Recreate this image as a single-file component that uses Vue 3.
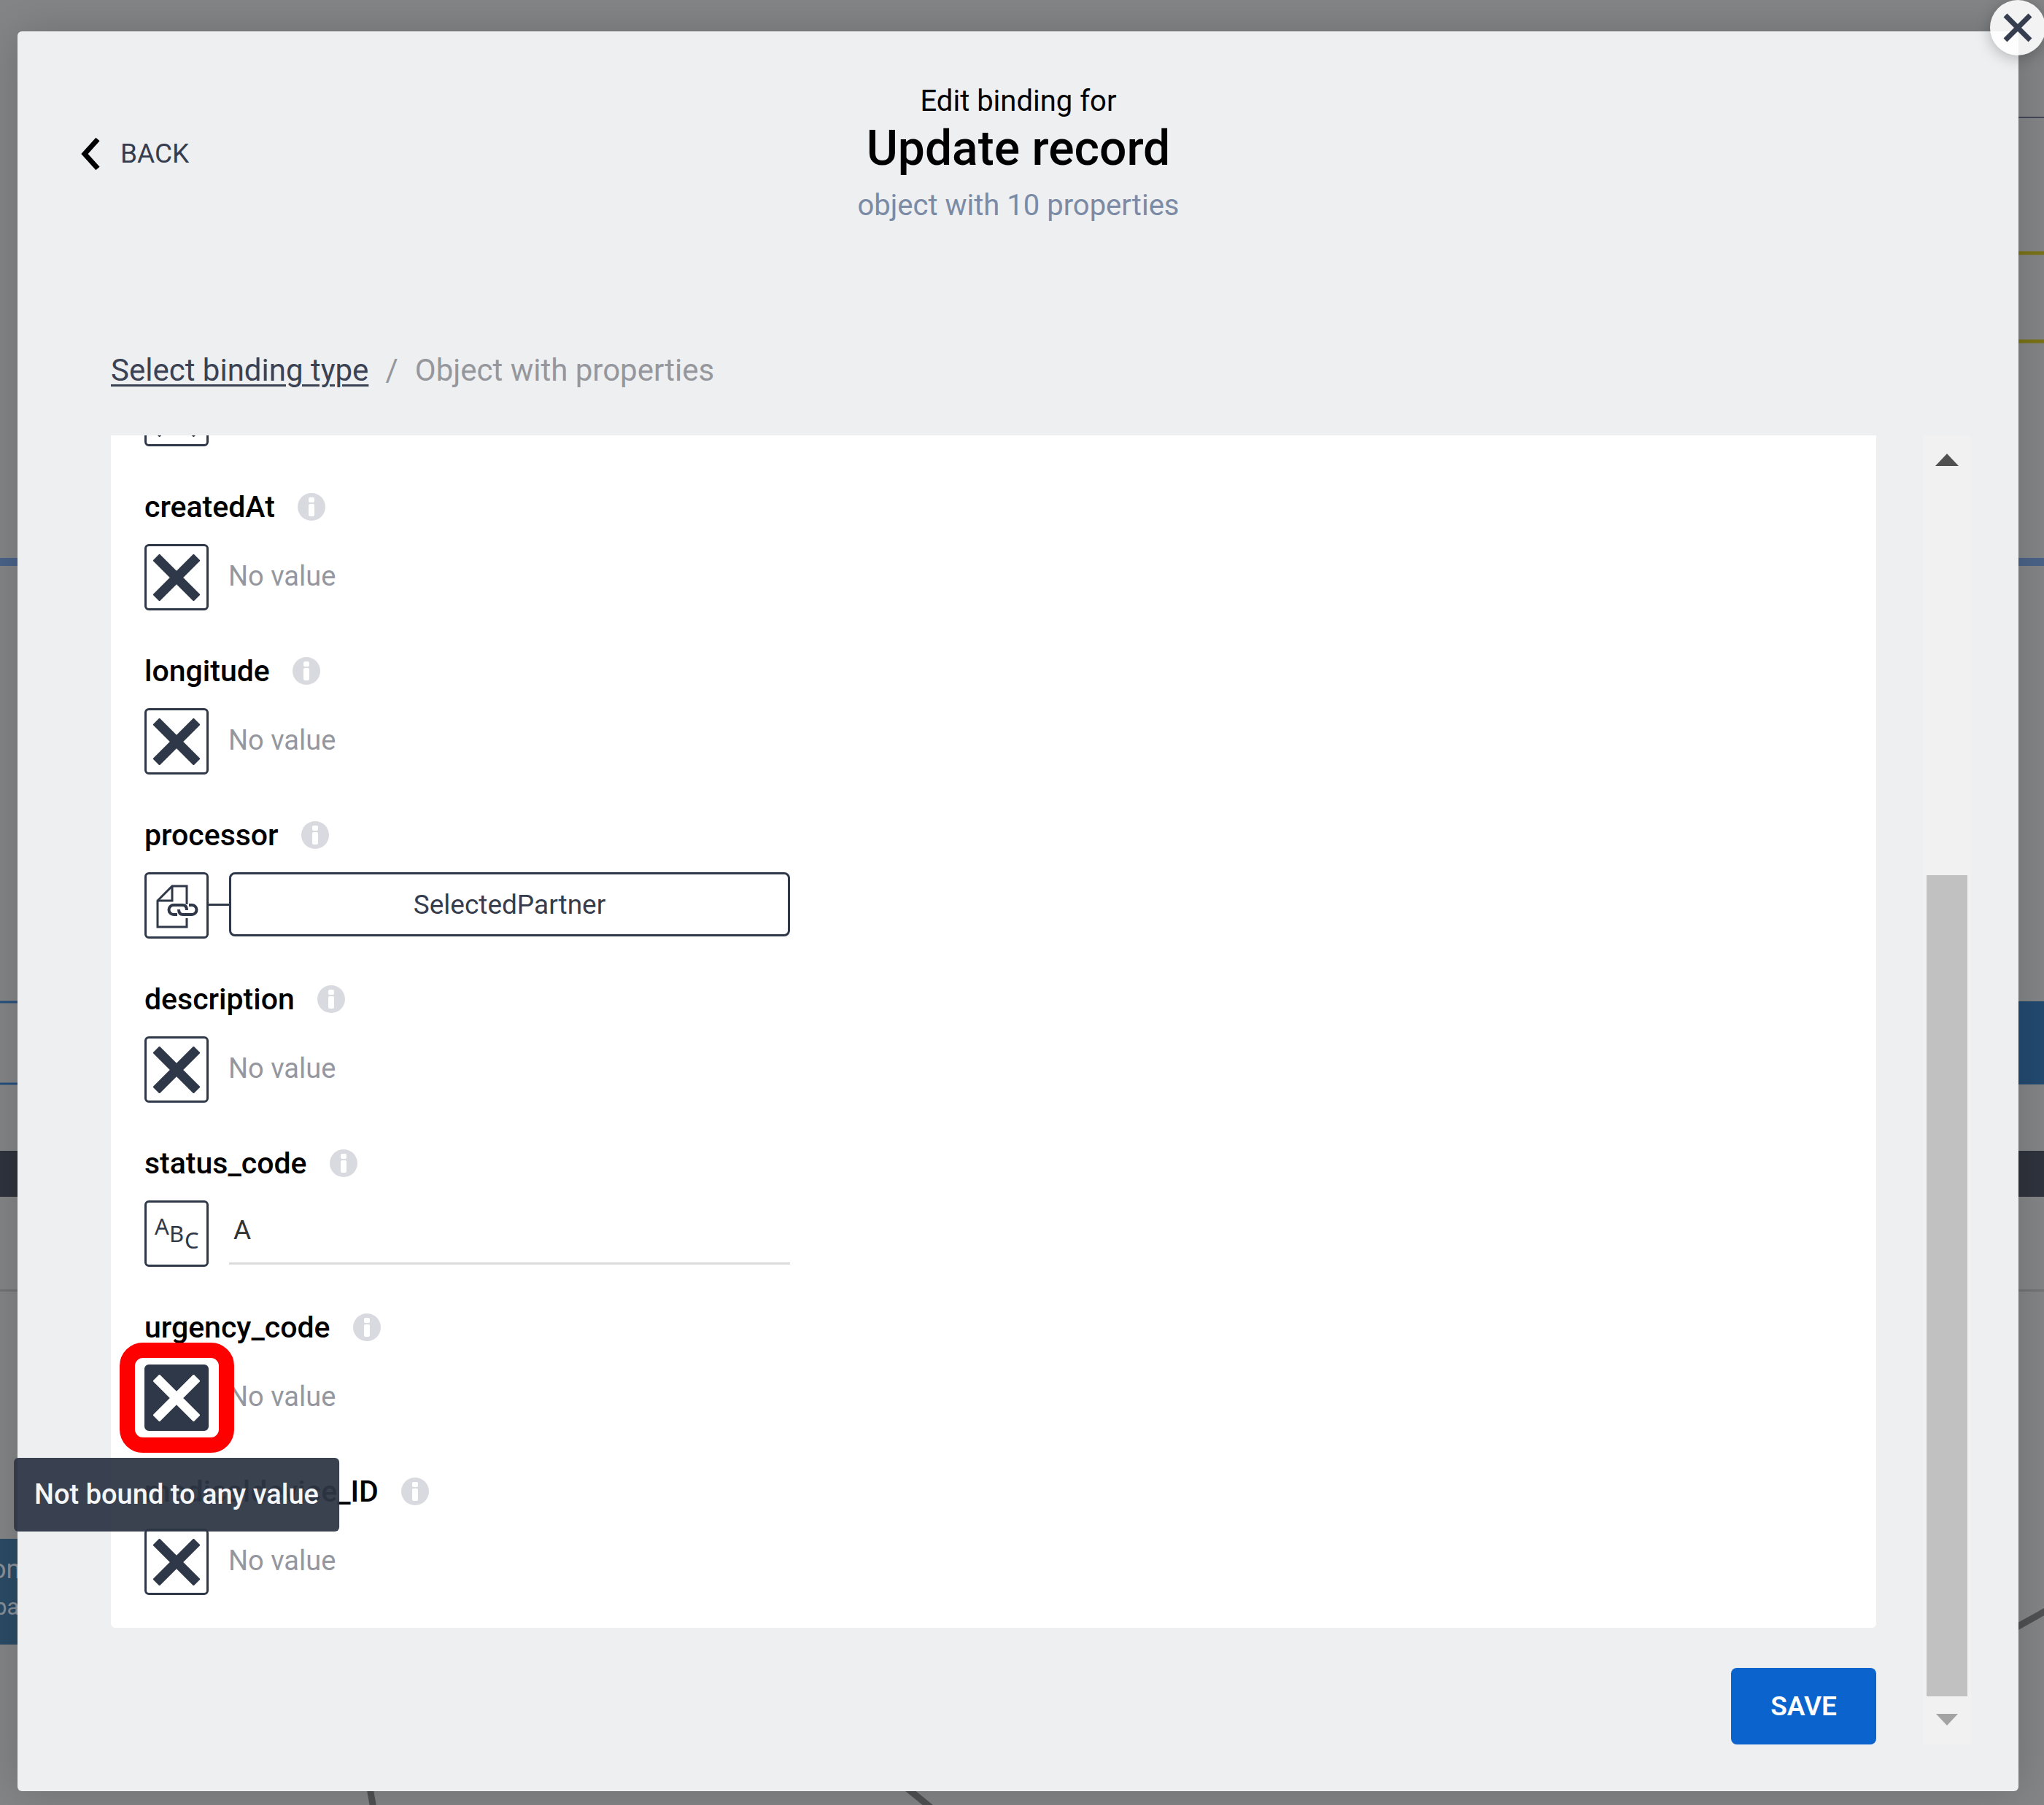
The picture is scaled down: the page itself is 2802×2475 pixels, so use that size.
<script setup>
import { ref } from 'vue'

const fields = ref([
  { name: 'createdAt', kind: 'none' },
  { name: 'longitude', kind: 'none' },
  { name: 'processor', kind: 'variable', value: 'SelectedPartner' },
  { name: 'description', kind: 'none' },
  { name: 'status_code', kind: 'text', value: 'A' },
  { name: 'urgency_code', kind: 'none', active: true },
  { name: 'medicaldevice_ID', kind: 'none' },
])
</script>

<template>
  <div class="screen">
    <div class="canvas" aria-hidden="true">
      <div class="band band-blue"></div>
      <div class="band band-dark"></div>
      <div class="band band-rule"></div>
      <svg class="canvas-left" width="1400" height="2475" viewBox="0 0 1400 2475">
        <path d="M0 1374H30M0 1486H30" stroke="#25517f" stroke-width="3" />
        <rect x="0" y="2110" width="60" height="145" fill="#2b4c66" />
        <text x="-12" y="2164" font-size="36">on</text>
        <text x="-8" y="2214" font-size="31">pa</text>
        <path d="M506 2446L512 2480" stroke="#505152" stroke-width="9" />
        <path d="M1236 2446L1278 2480" stroke="#505152" stroke-width="9" />
      </svg>
      <svg class="canvas-right" width="60" height="2475" viewBox="0 0 60 2475">
        <path d="M0 161H60" stroke="#454859" stroke-width="2" />
        <path d="M0 347H60M0 468H60" stroke="#7a7318" stroke-width="5" />
        <rect x="0" y="1373" width="60" height="114" fill="#234a70" />
        <path d="M10 2238L64 2208" stroke="#505152" stroke-width="9" />
      </svg>
    </div>

    <section class="modal" role="dialog" aria-labelledby="dialog-title">
      <button class="close" type="button" aria-label="Close">
        <svg width="40" height="40" viewBox="0 0 40 40">
          <path d="M3 3L37 37M37 3L3 37" stroke="#363d4e" stroke-width="7" />
        </svg>
      </button>

      <header class="header">
        <button class="back" type="button">
          <svg width="27" height="46" viewBox="0 0 27 46">
            <path d="M24 3L6 23L24 43" fill="none" stroke="#000" stroke-width="7" />
          </svg>
          BACK
        </button>
        <div class="titles">
          <p class="pretitle">Edit binding for</p>
          <h1 id="dialog-title" class="title">Update record</h1>
          <p class="subtitle">object with 10 properties</p>
        </div>
      </header>

      <nav class="crumbs" aria-label="Breadcrumb">
        <a href="#">Select binding type</a>
        <span>/</span>
        <span>Object with properties</span>
      </nav>

      <div class="body">
        <div class="main">
          <div class="panel">
            <button class="kind" type="button" aria-label="Binding type">
              <svg width="64" height="64" viewBox="0 0 64 64">
                <path d="M4 4L60 60M60 4L4 60" stroke="currentColor" stroke-width="13" />
              </svg>
            </button>
            <div v-for="field in fields" :key="field.name" class="field">
              <div class="field-head">
                <label :for="field.name">{{ field.name }}</label>
                <svg class="info" width="38" height="38" viewBox="0 0 38 38">
                  <circle cx="19" cy="19" r="19" fill="#d8dadf" />
                  <rect x="15" y="6" width="8" height="7" rx="2" fill="#fff" />
                  <rect x="15" y="15" width="8" height="17" rx="2" fill="#fff" />
                </svg>
              </div>
              <div class="field-row">
                <div class="kind-wrap">
                  <button
                    :id="field.kind === 'text' ? undefined : field.name"
                    class="kind"
                    :class="{ active: field.active }"
                    type="button"
                    :aria-label="'Binding type of ' + field.name"
                  >
                    <svg width="64" height="64" viewBox="0 0 64 64">
                      <path
                        v-if="field.kind === 'none'"
                        d="M4 4L60 60M60 4L4 60"
                        stroke="currentColor"
                        stroke-width="13"
                      />
                      <g
                        v-else-if="field.kind === 'variable'"
                        fill="none"
                        stroke="currentColor"
                        stroke-width="3"
                      >
                        <path d="M46 30V5H26L6 25V61H46V49" />
                        <path d="M26 5V25H6" />
                        <path d="M33 44H28A6 6 0 0 1 28 31H40Q46 31 46 38" stroke-width="4" />
                        <path d="M49 31H53A6 6 0 0 1 53 44H41Q35 44 35 37" stroke-width="4" />
                      </g>
                      <g v-else class="abc" fill="currentColor">
                        <text x="2" y="33">A</text>
                        <text x="22" y="43">B</text>
                        <text x="43" y="52">C</text>
                      </g>
                    </svg>
                  </button>
                  <template v-if="field.active">
                    <span class="ring"></span>
                    <span class="tooltip" role="tooltip">Not bound to any value</span>
                  </template>
                </div>
                <span v-if="field.kind === 'none'" class="empty">No value</span>
                <template v-else-if="field.kind === 'variable'">
                  <span class="link-line"></span>
                  <button class="variable" type="button">{{ field.value }}</button>
                </template>
                <input v-else :id="field.name" v-model="field.value" class="text" type="text" />
              </div>
            </div>
          </div>
          <button class="save" type="button">SAVE</button>
        </div>

        <div class="scrollbar" aria-hidden="true">
          <div class="arrow">
            <svg width="32" height="18" viewBox="0 0 32 18"><path d="M0 18L16 1L32 18Z" fill="#505050" /></svg>
          </div>
          <div class="track-space"></div>
          <div class="thumb"></div>
          <div class="arrow">
            <svg width="32" height="18" viewBox="0 0 32 18"><path d="M1 0L16 16L31 0Z" fill="#a3a3a3" /></svg>
          </div>
        </div>
      </div>
    </section>
  </div>
</template>

<style>
body {
  margin: 0;
}
</style>

<style scoped>
.screen {
  position: relative;
  display: flex;
  box-sizing: border-box;
  height: 100vh;
  padding: 43px 35px 19px 24px;
  overflow: hidden;
  background: #848586;
  font-family: Roboto, "Open Sans", sans-serif;
  color: #000;
}

button {
  padding: 0;
  border: 0;
  background: none;
  font: inherit;
}

svg {
  display: block;
  flex: none;
}

.canvas {
  position: absolute;
  inset: 0;
}

.canvas text {
  fill: #8a929a;
}

.canvas-left,
.canvas-right {
  position: absolute;
  top: 0;
  left: 0;
}

.canvas-right {
  left: auto;
  right: 0;
}

.band {
  position: absolute;
  left: 0;
  right: 0;
}

.band-blue {
  top: 765px;
  height: 11px;
  background: #4a6388;
}

.band-dark {
  top: 1578px;
  height: 63px;
  background: #2f333d;
}

.band-rule {
  top: 1768px;
  height: 3px;
  background: #727374;
}

.modal {
  position: relative;
  display: flex;
  flex: 1;
  flex-direction: column;
  box-sizing: border-box;
  padding: 72px 65px 64px 128px;
  border-radius: 6px;
  background: #eeeff1;
  box-shadow: 0 0 60px rgba(0, 0, 0, 0.18);
}

.close {
  position: absolute;
  top: -43px;
  right: -37px;
  display: flex;
  align-items: center;
  justify-content: center;
  width: 76px;
  height: 76px;
  border-radius: 50%;
  background: rgba(255, 255, 255, 0.9);
  box-shadow: 0 4px 20px rgba(0, 0, 0, 0.25);
}

.header {
  display: grid;
  grid-template-columns: 1fr auto 1fr;
  align-items: center;
  margin: 0 20px 177px -42px;
}

.back {
  display: flex;
  align-items: center;
  justify-self: start;
  gap: 28px;
  color: #363d4e;
  font-size: 37px;
}

.titles {
  text-align: center;
}

.titles > * {
  margin: 0;
  font-weight: 400;
}

.titles .pretitle {
  font-size: 40px;
  line-height: 48px;
}

.titles .title {
  margin-top: 3px;
  font-size: 66px;
  font-weight: 500;
  line-height: 76px;
}

.titles .subtitle {
  margin-top: 16px;
  color: #7b8ba6;
  font-size: 40px;
  line-height: 48px;
}

.crumbs {
  display: flex;
  gap: 23px;
  margin-bottom: 64px;
  color: #95979d;
  font-size: 42px;
  line-height: 50px;
}

.crumbs a {
  color: #3a4254;
  text-decoration-thickness: 3px;
  text-underline-offset: 5px;
}

.body {
  display: flex;
  flex: 1;
  gap: 64px;
  min-height: 0;
}

.main {
  display: flex;
  flex: 1;
  flex-direction: column;
  gap: 55px;
}

.panel {
  display: flex;
  flex: 1;
  flex-direction: column;
  justify-content: flex-end;
  gap: 56px;
  box-sizing: border-box;
  min-height: 0;
  padding: 0 46px 45px;
  overflow-y: clip;
  border-radius: 0 0 6px 6px;
  background: #fff;
}

.field {
  flex: none;
}

.field-head {
  display: flex;
  align-items: center;
  gap: 31px;
  margin-bottom: 24px;
  font-size: 41px;
  font-weight: 500;
  line-height: 54px;
}

.field-row {
  display: flex;
  align-items: flex-start;
}

.kind-wrap {
  position: relative;
}

.kind {
  display: flex;
  flex: none;
  align-items: center;
  justify-content: center;
  box-sizing: border-box;
  width: 88px;
  height: 91px;
  border: 3px solid #2e3848;
  border-radius: 6px;
  background: #fff;
  color: #2e3848;
}

.kind.active {
  background: #2e3848;
  color: #fff;
}

.abc {
  font-family: "Noto Sans", sans-serif;
  font-size: 31px;
}

.ring {
  position: absolute;
  inset: -30px -35px -30px -34px;
  z-index: 1;
  border: 21px solid #f00;
  border-radius: 32px;
}

.tooltip {
  position: absolute;
  top: 128px;
  left: 50%;
  z-index: 2;
  padding: 0 28px;
  transform: translateX(-50%);
  border-radius: 6px;
  background: rgba(46, 54, 69, 0.94);
  color: #f4f5f7;
  font-size: 38px;
  font-weight: 500;
  line-height: 101px;
  white-space: nowrap;
}

.empty {
  margin-left: 27px;
  color: #95979f;
  font-size: 38px;
  line-height: 88px;
}

.link-line {
  width: 28px;
  height: 3px;
  margin-top: 43px;
  background: #2e3848;
}

.variable {
  box-sizing: border-box;
  width: 769px;
  height: 88px;
  border: 3px solid #2e3848;
  border-radius: 8px;
  color: #363d4e;
  font-size: 37px;
}

.text {
  box-sizing: border-box;
  width: 769px;
  height: 88px;
  margin-left: 28px;
  padding: 0 6px 4px;
  border: 0;
  border-bottom: 3px solid #dcdcdc;
  outline: 0;
  background: none;
  color: #333;
  font: inherit;
  font-size: 37px;
}

.save {
  align-self: flex-end;
  width: 199px;
  height: 105px;
  border-radius: 8px;
  background: #0b63ce;
  color: #fff;
  font-size: 37px;
  font-weight: 600;
}

.scrollbar {
  display: flex;
  flex-direction: column;
  width: 66px;
  background: #f1f1f1;
}

.arrow {
  display: flex;
  align-items: center;
  justify-content: center;
  height: 66px;
}

.track-space {
  flex: 537;
}

.thumb {
  flex: 1125;
  margin: 0 5px;
  background: #c1c1c1;
}
</style>
